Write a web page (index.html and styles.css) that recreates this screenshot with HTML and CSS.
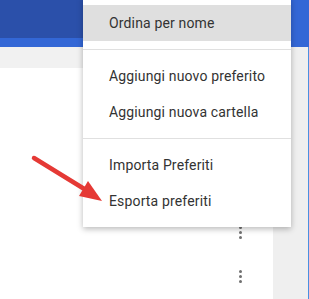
FILE: index.html
```html
<html>

<head>
    <title>Preferiti</title>
    <link rel="stylesheet" href="styles.css">
</head>

<body>
    <div class="page">
        <header class="top-bar">
            <div class="toolbar"></div>
        </header>
        <div class="main">
            <div class="list">
                <div class="list-head"></div>
                <div class="rows">
                    <div class="row">
                        <span class="kebab"><i></i><i></i><i></i></span>
                    </div>
                    <div class="row">
                        <span class="kebab"><i></i><i></i><i></i></span>
                    </div>
                </div>
            </div>
            <div class="side"></div>
        </div>

        <div class="menu">
            <div class="menu-group">
                <div class="menu-item active">Ordina per nome</div>
            </div>
            <div class="menu-group">
                <div class="menu-item">Aggiungi nuovo preferito</div>
                <div class="menu-item">Aggiungi nuova cartella</div>
            </div>
            <div class="menu-group">
                <div class="menu-item">Importa Preferiti</div>
                <div class="menu-item">Esporta preferiti</div>
            </div>
        </div>

        <!-- freccia rossa -->
        <svg class="arrow" width="309" height="299" viewBox="0 0 309 299">
            <line x1="34" y1="158" x2="86" y2="190" stroke="#e53935" stroke-width="4.5" stroke-linecap="round" />
            <polygon points="88,181 102,201 79,196" fill="#e53935" />
        </svg>
    </div>
</body>

</html>
```

FILE: styles.css
```css
body {
    margin: 0;
    padding: 0;
    font-family: Roboto, "Liberation Sans", Arial, sans-serif;
    background: #fff;
    overflow: hidden;
}

.page {
    position: relative;
    width: 309px;
    height: 299px;
    overflow: hidden;
}

.top-bar {
    height: 47px;
    background-color: #3367d6;
}

.toolbar {
    width: 270px;
    height: 38px;
    background-color: #2b50aa;
}

.main {
    display: flex;
    height: 252px;
}

.list {
    flex: 1;
    background: white;
}

.list-head {
    height: 21px;
    background: #f1f1f1;
}

.rows {
    padding-top: 142px;
}

.row {
    height: 44px;
    display: flex;
    align-items: center;
    justify-content: flex-end;
    padding-right: 21px;
}

.kebab {
    width: 24px;
    display: flex;
    flex-direction: column;
    align-items: center;
    gap: 2px;
}

.kebab i {
    width: 3px;
    height: 3px;
    border-radius: 50%;
    background: #707070;
}

.side {
    width: 35px;
    background: #efefef;
    border-right: 1px solid #4a90e2;
}

.menu {
    position: absolute;
    left: 83px;
    top: -3px;
    width: 208px;
    background: white;
    box-shadow: 0 2px 6px rgba(0, 0, 0, 0.28);
}

.menu-group {
    padding: 8px 0;
}

.menu-group + .menu-group {
    border-top: 1px solid #e0e0e0;
}

.menu-item {
    height: 36px;
    line-height: 36px;
    padding: 0 24px 0 26px;
    font-size: 14px;
    letter-spacing: 0.15px;
    color: #333;
    white-space: nowrap;
}

.menu-item.active {
    background-color: #dfdfdf;
}

.arrow {
    position: absolute;
    left: 0;
    top: 0;
    pointer-events: none;
}
```
